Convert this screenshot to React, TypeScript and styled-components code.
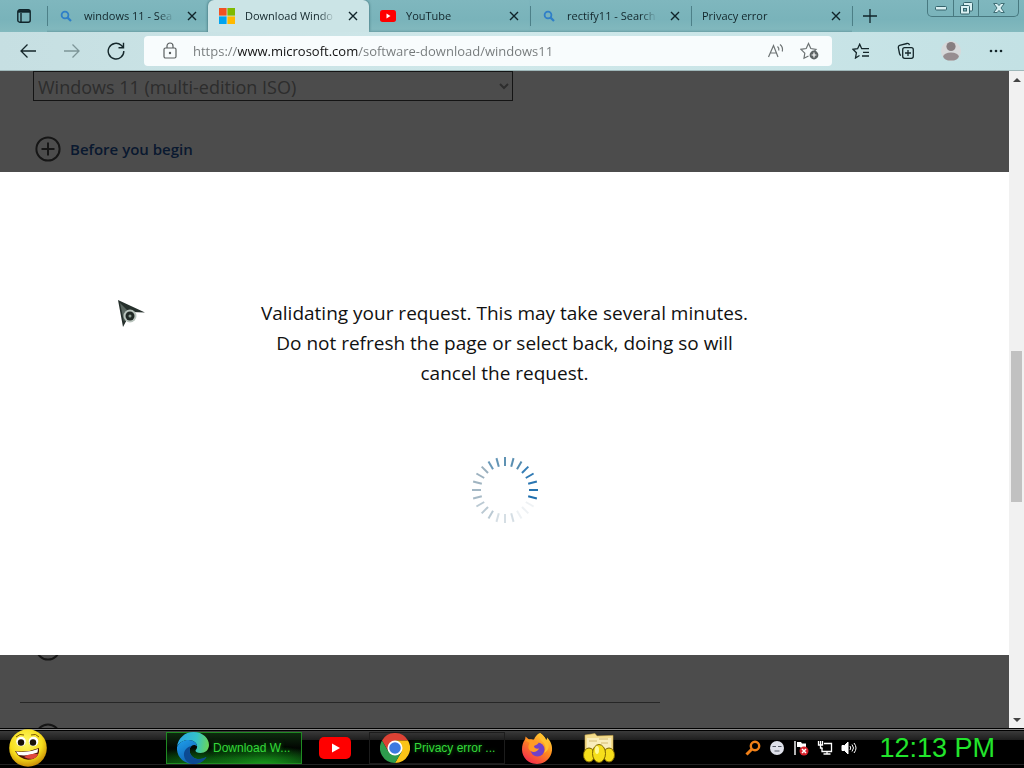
import React from "react";
import styled, { createGlobalStyle } from "styled-components";

const GlobalStyle = createGlobalStyle`
  * { box-sizing: border-box; }
  html, body, #root { height: 100%; }
  body { margin: 0; font-family: "Open Sans", "Noto Sans", sans-serif; }
  button { font: inherit; color: inherit; background: none; border: 0; padding: 0; }
  svg { display: block; flex: none; }
`;

const Desktop = styled.div`
  position: relative;
  display: flex;
  flex-direction: column;
  height: 100vh;
  overflow: hidden;
  background: #000;
`;

/* ---------- Tab strip ---------- */

const TabStrip = styled.header`
  display: flex;
  flex: none;
  height: 32px;
  background: linear-gradient(#7fb7be, #79b3ba 60%, #83b9be);
`;

const TabMenuButton = styled.button`
  display: grid;
  place-items: center;
  flex: none;
  width: 47px;
`;

const Tabs = styled.nav`
  display: flex;
  flex: 0 1 805px;
  min-width: 0;
`;

const Tab = styled.div<{ $active?: boolean; $divided?: boolean }>`
  display: flex;
  align-items: center;
  flex: 1 1 0;
  min-width: 0;
  gap: 10px;
  padding: 0 8px 0 11px;
  color: #12262b;
  background-color: ${(p) => (p.$active ? "#cbe4e6" : "transparent")};
  border-radius: ${(p) => (p.$active ? "6px 6px 0 0" : "0")};
  box-shadow: ${(p) => (p.$active ? "0 0 3px #2f5f66" : "inset 0 -2px 2px -1px #6a9ea5")};
  background-image: ${(p) =>
    p.$divided ? "linear-gradient(#4c7f86, #4c7f86)" : "none"};
  background-size: 1px 20px;
  background-repeat: no-repeat;
  background-position: 0 6px;
`;

const TabTitle = styled.a`
  flex: 1;
  min-width: 0;
  overflow: hidden;
  white-space: nowrap;
  font-size: 11px;
  line-height: 16px;
  color: inherit;
  text-decoration: none;
  mask-image: linear-gradient(to right, #000 82%, transparent);
`;

const CloseButton = styled.button`
  display: grid;
  place-items: center;
  flex: none;
  width: 16px;
  height: 16px;
`;

const NewTabButton = styled.button`
  display: grid;
  place-items: center;
  width: 36px;
  background: linear-gradient(#4c7f86, #4c7f86) 0 6px / 1px 20px no-repeat;
`;

const Caption = styled.div`
  display: flex;
  flex: none;
  height: 17px;
  margin: 0 5px 0 auto;
  border: 1px solid #487980;
  border-top: 0;
  border-radius: 0 0 5px 5px;
`;

const CaptionButton = styled.button<{ $wide?: boolean }>`
  display: grid;
  place-items: center;
  width: ${(p) => (p.$wide ? 40 : 25)}px;
  & + & { border-left: 1px solid #487980; }
`;

/* ---------- Toolbar ---------- */

const Toolbar = styled.div`
  position: relative;
  display: flex;
  align-items: center;
  flex: none;
  height: 39px;
  padding: 0 6px;
  background: linear-gradient(to right, #c6dfe2, #cfe8ea 50%, #c3e1e4);
  border-bottom: 1px solid #9fb8ba;
`;

const ToolButton = styled.button<{ $wide?: boolean }>`
  display: grid;
  place-items: center;
  flex: none;
  width: ${(p) => (p.$wide ? 45 : 44)}px;
  height: 32px;
`;

const AddressBar = styled.div`
  display: flex;
  align-items: center;
  flex: 1;
  min-width: 0;
  height: 30px;
  margin: 0 6px;
  padding: 0 12px 0 18px;
  gap: 15px;
  background: #f8fcfd;
  border-radius: 4px;
`;

const AddressInput = styled.input`
  flex: 1;
  min-width: 0;
  border: 0;
  outline: 0;
  padding: 0;
  font: 13px/20px "Open Sans", sans-serif;
  color: transparent;
  background: linear-gradient(to right, #74797a 45px, #111 45px 165px, #74797a 165px);
  background-clip: text;
  -webkit-background-clip: text;
`;

/* ---------- Page ---------- */

const Viewport = styled.main`
  display: flex;
  flex: 1;
  min-height: 0;
  background: #fff;
`;

const Page = styled.div`
  position: relative;
  flex: 1;
  min-width: 0;
  overflow: hidden;
`;

const Document = styled.div`
  display: flex;
  flex-direction: column;
  padding: 0 33px;
`;

const EditionSelect = styled.select`
  width: 480px;
  max-width: 100%;
  height: 30px;
  padding: 1px 0 0;
  font: 18px/26px "Open Sans", sans-serif;
  color: #969696;
  background: #fff;
  border: 1px solid #444;
  border-radius: 0;
`;

const Expander = styled.button<{ $space: number }>`
  display: flex;
  align-items: center;
  gap: 9px;
  height: 26px;
  margin-top: ${(p) => p.$space}px;
  padding-left: 2px;
  font-size: 15px;
  font-weight: 600;
  color: #1f549e;
`;

const Rule = styled.hr`
  width: 640px;
  max-width: 100%;
  height: 1px;
  margin: 41px 0 0 -13px;
  border: 0;
  background: #808080;
`;

const Overlay = styled.div`
  position: absolute;
  inset: 0;
  display: flex;
  padding: 101px 0 73px;
  background: rgba(0, 0, 0, 0.7);
`;

const Dialog = styled.section`
  display: flex;
  flex-direction: column;
  align-items: center;
  flex: 1;
  padding-top: 126px;
  gap: 68px;
  background: #fff;
`;

const Message = styled.p`
  max-width: 500px;
  margin: 0;
  text-align: center;
  font-size: 19px;
  line-height: 30px;
  color: #111;
`;

const ScrollBar = styled.div`
  display: flex;
  flex-direction: column;
  align-items: center;
  flex: none;
  width: 15px;
  background: #f1f1f1;
`;

const ScrollArrow = styled.button`
  display: grid;
  place-items: center;
  width: 15px;
  height: 17px;
`;

const ScrollTrack = styled.div`
  display: flex;
  flex-direction: column;
  flex: 1;
`;

const ScrollSpace = styled.div<{ $part: number }>`
  flex: ${(p) => p.$part};
`;

const ScrollThumb = styled.div`
  flex: 151;
  width: 11px;
  background: #c1c1c1;
`;

/* ---------- Taskbar ---------- */

const Taskbar = styled.footer`
  display: flex;
  align-items: center;
  flex: none;
  height: 40px;
  padding: 0 29px 0 8px;
  background: linear-gradient(
    #000 0 1px, #8a8a8a 1px 2px, #000 2px 3px, #3a3a3a 3px, #1e1e1e 12px,
    #000 12px 36px, #222 36px 37px, #000 37px
  );
`;

const StartButton = styled.button`
  width: 40px;
  margin-right: 118px;
`;

const TaskButton = styled.button<{ $active?: boolean }>`
  display: flex;
  align-items: center;
  flex: none;
  width: 136px;
  height: 32px;
  padding-left: 10px;
  gap: 4px;
  font: 12px/16px "Liberation Sans", Arial, sans-serif;
  color: #35d83a;
  text-shadow: 0 0 4px #0a7a10;
  border: 1px solid ${(p) => (p.$active ? "#1f8a22" : "#1c1c1c")};
  background: ${(p) =>
    p.$active
      ? "radial-gradient(ellipse at 72% 110%, #18a31c, transparent 45%), radial-gradient(ellipse at 25% 110%, #0d6e10, transparent 40%), linear-gradient(#0d2a0e, #020602 50%, #06330a)"
      : "transparent"};
`;

const TaskIcon = styled.button<{ $gap: number }>`
  margin-left: ${(p) => p.$gap}px;
`;

const Tray = styled.div`
  display: flex;
  align-items: center;
  gap: 8px;
  margin-left: auto;
`;

const Clock = styled.time`
  margin-left: 14px;
  font: 27px/40px "Liberation Sans", Arial, sans-serif;
  white-space: nowrap;
  color: #22e42c;
`;

const Pointer = styled.svg`
  position: absolute;
  left: 116px;
  top: 298px;
  pointer-events: none;
`;

/* ---------- Drawings ---------- */

const SearchGlyph = () => (
  <svg width="16" height="14" viewBox="-1 0 16 14" fill="none" stroke="#2f7fc8" strokeWidth="1.8">
    <circle cx="6" cy="6" r="3.4" />
    <path d="M8.600 8.600 12 12" strokeWidth="2.200" />
  </svg>
);

const MicrosoftLogo = () => (
  <svg width="16" height="16" viewBox="0 0 16 16">
    <path fill="#f25022" d="M0 0h7.600v7.600H0z" />
    <path fill="#7fba00" d="M8.400 0H16v7.600H8.400z" />
    <path fill="#00a4ef" d="M0 8.400h7.600V16H0z" />
    <path fill="#ffb900" d="M8.400 8.400H16V16H8.400z" />
  </svg>
);

const YouTubeLogo = ({ w, h }: { w: number; h: number }) => (
  <svg width={w} height={h} viewBox="0 0 32 22" preserveAspectRatio="none">
    <rect width="32" height="22" rx="5" fill="#f00" />
    <path d="M13 6.500 21 11l-8 4.500z" fill="#fff" />
  </svg>
);

const Cross = () => (
  <svg width="10" height="10" viewBox="0 0 10 10" stroke="#10242a" strokeWidth="1.400">
    <path d="M1 1l8 8M9 1 1 9" />
  </svg>
);

const CirclePlus = () => (
  <svg width="26" height="26" viewBox="0 0 26 26" fill="none" stroke="#4a4a4a" strokeWidth="2">
    <circle cx="13" cy="13" r="11.600" />
    <path d="M13 6.500v13M6.500 13h13" />
  </svg>
);

const Spinner = () => (
  <svg width="68" height="68" viewBox="0 0 68 68" role="img" aria-label="Loading">
    {Array.from({ length: 24 }, (_, i) => {
      const age = (7 - i + 24) % 24;
      const strength = age > 20 ? 0.12 : age > 17 ? 0.3 : age > 14 ? 0.5 : 1 - age * 0.025;
      return (
        <line
          key={i}
          x1="34"
          y1="1"
          x2="34"
          y2="10"
          stroke={age < 5 ? "#1f6fae" : age < 10 ? "#3d7ba4" : "#7895a8"}
          strokeWidth="2"
          opacity={strength}
          transform={`rotate(${i * 15} 34 34)`}
        />
      );
    })}
  </svg>
);

const StartFace = () => (
  <svg width="40" height="38" viewBox="0 0 40 38">
    <defs>
      <radialGradient id="face" cx="45%" cy="35%" r="65%">
        <stop offset="0" stopColor="#fffb6a" />
        <stop offset=".65" stopColor="#f7de1c" />
        <stop offset="1" stopColor="#c98d05" />
      </radialGradient>
    </defs>
    <circle cx="20" cy="19" r="18.800" fill="url(#face)" />
    <circle cx="13" cy="12.500" r="4.800" fill="#fff" />
    <circle cx="25.500" cy="12.500" r="4.800" fill="#fff" />
    <circle cx="13" cy="13.500" r="3.200" fill="#1a1208" />
    <circle cx="25" cy="13.500" r="3.200" fill="#1a1208" />
    <path d="M8 8q4-4 8-2M23 6q5-2 8 2" stroke="#7a5500" fill="none" />
    <path d="M7 22q12 2 24-3 1 8-6 11-12 3-18-8z" fill="#4b1408" />
    <path d="M8 22.500q11 2 22-2.500l-.5 3.500q-9 4-19 2.500z" fill="#fff" />
    <path d="M16 28q6-4 14-3-1 4-6 5-5 0-8-2z" fill="#e0473f" />
  </svg>
);

const EdgeLogo = () => (
  <svg width="32" height="32" viewBox="0 0 32 32">
    <defs>
      <linearGradient id="edgeTop" x1="0" y1=".4" x2="1" y2=".5">
        <stop offset="0" stopColor="#2aa6e6" />
        <stop offset=".6" stopColor="#35c1c9" />
        <stop offset="1" stopColor="#69d65a" />
      </linearGradient>
      <linearGradient id="edgeLow" x1="0" y1="0" x2=".7" y2="1">
        <stop offset="0" stopColor="#1fa0ec" />
        <stop offset="1" stopColor="#0d55a8" />
      </linearGradient>
    </defs>
    <path fill="url(#edgeTop)" d="M0 15C1 6 8 0 16.500 0 26 0 32 6.500 32 13c0 5-4 8-8.500 8-3.500 0-5-1.300-5-2.300 0-.8 1.600-1.500 1.600-4.200 0-3.500-3.500-6.500-8.500-6.500C6 8 1.500 11 0 15z" />
    <path fill="url(#edgeLow)" d="M0 15C2 10.500 6.500 8 11.600 8c5 0 8.500 3 8.500 6.500-1.500-2-4-2-5.600-.5-3 2.600-2.500 8.500 2 11.500 4 2.500 9 1.500 13-.6C26 30 21.500 32 16 32 6.500 32-.8 24.500 0 15z" />
    <path fill="#0c4a92" d="M14.500 14c-5 1-8 5-7.500 9.500.5 4.500 4.500 8.500 9 8.500 5.500 0 10.500-2.500 13.500-7-4 2-9 3-13 .5-4.500-3-5-8.900-2-11.500z" />
  </svg>
);

const ChromeLogo = () => (
  <svg width="30" height="30" viewBox="0 0 30 30">
    <path fill="#dc4234" d="M2 7.500A15 15 0 0 1 28 7.500H15l-6.500 11.250z" />
    <path fill="#fbc417" d="M28 7.500A15 15 0 0 1 15 30l6.500-11.250L15 7.500z" />
    <path fill="#2d9c4c" d="M15 30A15 15 0 0 1 2 7.500l6.500 11.250H21.500z" />
    <circle cx="15" cy="15" r="7.500" fill="#fff" />
    <circle cx="15" cy="15" r="5.800" fill="#3b79e0" />
  </svg>
);

const FirefoxLogo = () => (
  <svg width="32" height="32" viewBox="0 0 32 32">
    <defs>
      <linearGradient id="fox" x1=".85" y1="0" x2=".2" y2="1">
        <stop offset="0" stopColor="#ffe23c" />
        <stop offset=".45" stopColor="#ff8a1f" />
        <stop offset="1" stopColor="#f2264f" />
      </linearGradient>
    </defs>
    <path fill="url(#fox)" d="M19 1c3 2 5 4 6 7 1-.5 1-1.500 1-2.500 4 4 5.500 8 5 13C30.300 26 24 32 16 32S1 26 1 17.500c0-4 1-7.500 3-10 .3-1 .5-2 .5-3L8 7.500c2-.6 4-.4 5 .1C14 5 16 2 19 1z" />
    <circle cx="16.500" cy="17.500" r="7" fill="#7141c8" />
    <path fill="#ff9a24" d="M4 8c3-1.500 7-.5 9 1.500l4.500.5c.5 2.500-3 3-4.500 4 0 2 2 3 5 2.500-2 4.500-8.500 4.500-10.500 0-.5-3 .5-4 1-5.500C7 10 5.500 9 4 8z" />
    <path fill="#ffc02e" d="M19 1c-2 5 1 7 4 10 2 3 2 7 0 10 6-3 6-9 2-13-1-3-3-5-6-7z" />
  </svg>
);

const FolderIcon = () => (
  <svg width="32" height="30" viewBox="0 0 32 30">
    <path fill="#f3dc8d" stroke="#cda94a" strokeWidth=".6" d="M2 2 12 .6 14 3l16-.6V24H2z" />
    <path fill="#f9edbb" d="M4 5h24v10H4z" />
    <path stroke="#d4bb71" d="M6 8h8M16 6h9M18 10h7" />
    <g fill="#f6df1b" stroke="#7b6300">
      <ellipse cx="6" cy="22" rx="5.500" ry="7" />
      <ellipse cx="26" cy="22" rx="5.500" ry="7" />
      <ellipse cx="16" cy="20.500" rx="6.500" ry="9" />
    </g>
    <ellipse cx="14" cy="17" rx="2" ry="4" fill="#fffa9a" />
  </svg>
);

export default function App() {
  return (
    <Desktop>
      <GlobalStyle />
      <TabStrip>
        <TabMenuButton aria-label="Tab actions">
          <svg width="14" height="14" viewBox="0 0 14 14" fill="none" stroke="#10242a" strokeWidth="1.400">
            <rect x=".8" y=".8" width="12.400" height="12.400" rx="2" />
            <path d="M1 2.400h12" strokeWidth="2.600" />
            <path d="M4 4v9" />
          </svg>
        </TabMenuButton>
        <Tabs>
          <Tab $divided>
            <SearchGlyph />
            <TabTitle href="#">windows 11 - Sea</TabTitle>
            <CloseButton aria-label="Close tab"><Cross /></CloseButton>
          </Tab>
          <Tab $active>
            <MicrosoftLogo />
            <TabTitle href="#">Download Windo</TabTitle>
            <CloseButton aria-label="Close tab"><Cross /></CloseButton>
          </Tab>
          <Tab>
            <YouTubeLogo w={16} h={12} />
            <TabTitle href="#">YouTube</TabTitle>
            <CloseButton aria-label="Close tab"><Cross /></CloseButton>
          </Tab>
          <Tab $divided>
            <SearchGlyph />
            <TabTitle href="#">rectify11 - Search</TabTitle>
            <CloseButton aria-label="Close tab"><Cross /></CloseButton>
          </Tab>
          <Tab $divided>
            <TabTitle href="#">Privacy error</TabTitle>
            <CloseButton aria-label="Close tab"><Cross /></CloseButton>
          </Tab>
        </Tabs>
        <NewTabButton aria-label="New tab">
          <svg width="14" height="14" viewBox="0 0 14 14" stroke="#10242a" strokeWidth="1.300">
            <path d="M7 0v14M0 7h14" />
          </svg>
        </NewTabButton>
        <Caption>
          <CaptionButton aria-label="Minimize">
            <svg width="12" height="5" viewBox="0 0 12 5">
              <rect x=".5" y=".5" width="11" height="3.500" rx="1" fill="#d9f0f2" stroke="#34636b" />
            </svg>
          </CaptionButton>
          <CaptionButton aria-label="Restore">
            <svg width="13" height="13" viewBox="0 0 13 13" fill="#d9f0f2" stroke="#34636b">
              <rect x="3.500" y=".5" width="9" height="8.500" rx="1" />
              <rect x=".5" y="3.500" width="9" height="8.500" rx="1" />
              <rect x="3.500" y="6.500" width="3" height="2.500" fill="#7fb7be" />
            </svg>
          </CaptionButton>
          <CaptionButton $wide aria-label="Close">
            <svg width="12" height="10" viewBox="0 0 12 10">
              <path fill="#d9f0f2" stroke="#34636b" strokeWidth=".9" d="M.7.5h3.500L6 2.600 7.800.5h3.500L8 5l3.300 4.500H7.800L6 7.400 4.200 9.500H.7L4 5z" />
            </svg>
          </CaptionButton>
        </Caption>
      </TabStrip>

      <Toolbar>
        <ToolButton aria-label="Back">
          <svg width="16" height="14" viewBox="0 0 16 14" fill="none" stroke="#14262a" strokeWidth="1.300">
            <path d="M16 7H1M7.500.5 1 7l6.500 6.500" />
          </svg>
        </ToolButton>
        <ToolButton aria-label="Forward">
          <svg width="16" height="14" viewBox="0 0 16 14" fill="none" stroke="#7d9598" strokeWidth="1.300">
            <path d="M0 7h15M8.500.5 15 7l-6.500 6.500" />
          </svg>
        </ToolButton>
        <ToolButton aria-label="Refresh">
          <svg width="18" height="18" viewBox="0 0 18 18" fill="none" stroke="#14262a" strokeWidth="1.400">
            <path d="M16.800 9A7.800 7.800 0 1 1 14.200 3.300L16.500 5.500M16.500.8v4.900h-5" />
          </svg>
        </ToolButton>
        <AddressBar>
          <svg width="16" height="18" viewBox="0 0 16 18" fill="none" stroke="#5a5f60" strokeWidth="1.200">
            <rect x="2" y="6" width="12" height="10" rx="1.500" />
            <path d="M5 6V4a3 3 0 0 1 6 0v2" />
            <circle cx="8" cy="11" r=".6" fill="#5a5f60" />
          </svg>
          <AddressInput
            aria-label="Address"
            readOnly
            value="https://www.microsoft.com/software-download/windows11"
          />
          <button aria-label="Read aloud">
            <svg width="18" height="16" viewBox="0 0 18 16" fill="none" stroke="#6d7374" strokeWidth="1.200">
              <path d="M1.500 14 6.500 2.500 11 14M3.300 10h6" />
              <path d="M10.500 3.500q1.800 1.500 1.300 4M13 1.500q3.300 2.500 2.300 7" />
            </svg>
          </button>
          <button aria-label="Add to favorites">
            <svg width="20" height="18" viewBox="0 0 20 18" fill="none" stroke="#6d7374" strokeWidth="1.200">
              <path d="M8.500 14 4 16.300l.8-5.200L1 7.300l5.200-.8L8.500 1.500l2.300 5 5.200.8-1.500 1.500" />
              <circle cx="14" cy="13" r="4.400" fill="#5d6364" stroke="none" />
              <path d="M14 10.600v4.800M11.600 13h4.800" stroke="#fff" />
            </svg>
          </button>
        </AddressBar>
        <ToolButton $wide aria-label="Favorites">
          <svg width="18" height="16" viewBox="0 0 18 16" fill="none" stroke="#14262a" strokeWidth="1.300">
            <path d="M7.500 12.500 3.500 15l.9-5.200L1 6.300l4.600-.6L7.700 1.200l2 4.500h7.300M11 9.300h6M10 13h7" />
          </svg>
        </ToolButton>
        <ToolButton $wide aria-label="Collections">
          <svg width="18" height="18" viewBox="0 0 18 18" fill="none" stroke="#14262a" strokeWidth="1.300">
            <rect x="5.700" y="5.700" width="10.600" height="10.600" rx="2" />
            <path d="M11 8v6M8 11h6M4 13.500Q2.800 13 2.500 11.500L1.300 5.500Q1.200 3.800 2.600 3.400L10 1.500q2-.3 2.500 1.700" />
          </svg>
        </ToolButton>
        <ToolButton $wide aria-label="Profile">
          <svg width="20" height="20" viewBox="0 0 20 20">
            <circle cx="10" cy="10" r="10" fill="#d7d9da" />
            <circle cx="10" cy="5.500" r="4.600" fill="#877e80" />
            <ellipse cx="10" cy="15.600" rx="7.800" ry="4" fill="#978d90" />
          </svg>
        </ToolButton>
        <ToolButton $wide aria-label="Settings and more">
          <svg width="14" height="4" viewBox="0 0 14 4" fill="#14262a">
            <circle cx="2" cy="2" r="1.300" />
            <circle cx="7" cy="2" r="1.300" />
            <circle cx="12" cy="2" r="1.300" />
          </svg>
        </ToolButton>
      </Toolbar>

      <Viewport>
        <Page>
          <Document>
            <EditionSelect aria-label="Select download">
              <option>Windows 11 (multi-edition ISO)</option>
            </EditionSelect>
            <Expander $space={35}>
              <CirclePlus />
              Before you begin
            </Expander>
            <Expander $space={473} aria-label="Expand section">
              <CirclePlus />
            </Expander>
            <Rule />
            <Expander $space={20} aria-label="Expand section">
              <CirclePlus />
            </Expander>
          </Document>
          <Overlay>
            <Dialog role="dialog" aria-label="Validating">
              <Message>
                Validating your request. This may take several minutes. Do not refresh the
                page or select back, doing so will cancel the request.
              </Message>
              <Spinner />
            </Dialog>
          </Overlay>
        </Page>
        <ScrollBar>
          <ScrollArrow aria-label="Scroll up">
            <svg width="8" height="4" viewBox="0 0 8 4"><path d="M0 4 4 0l4 4z" fill="#444" /></svg>
          </ScrollArrow>
          <ScrollTrack>
            <ScrollSpace $part={263} />
            <ScrollThumb />
            <ScrollSpace $part={209} />
          </ScrollTrack>
          <ScrollArrow aria-label="Scroll down">
            <svg width="8" height="4" viewBox="0 0 8 4"><path d="M0 0h8L4 4z" fill="#444" /></svg>
          </ScrollArrow>
        </ScrollBar>
      </Viewport>

      <Taskbar>
        <StartButton aria-label="Start"><StartFace /></StartButton>
        <TaskButton $active><EdgeLogo />Download W...</TaskButton>
        <TaskIcon $gap={17} aria-label="YouTube"><YouTubeLogo w={32} h={22} /></TaskIcon>
        <TaskIcon as="span" $gap={18}>
          <TaskButton><ChromeLogo />Privacy error ...</TaskButton>
        </TaskIcon>
        <TaskIcon $gap={16} aria-label="Firefox"><FirefoxLogo /></TaskIcon>
        <TaskIcon $gap={30} aria-label="Files"><FolderIcon /></TaskIcon>
        <Tray>
          <svg width="16" height="16" viewBox="0 0 16 16" fill="none" stroke="#f08018">
            <circle cx="10" cy="6" r="4.200" strokeWidth="2.400" />
            <path d="M7 9 1.500 14.500" strokeWidth="3" />
          </svg>
          <svg width="16" height="16" viewBox="0 0 16 16" fill="none" stroke="#555a66">
            <circle cx="8" cy="8" r="7" fill="#dfe1ea" stroke="none" />
            <path d="M3.500 6.500h3.500M9 6.500h3.500M5.500 11h5" />
          </svg>
          <svg width="16" height="16" viewBox="0 0 16 16">
            <path d="M2 1v14" stroke="#fff" strokeWidth="1.400" />
            <path d="M4 2h4l1 1.500h4V8H8L7 7H4z" fill="#fff" />
            <circle cx="11" cy="11" r="4.500" fill="#d8212b" />
            <path d="M9 9l4 4M13 9l-4 4" stroke="#fff" strokeWidth="1.500" />
          </svg>
          <svg width="16" height="16" viewBox="0 0 16 16" fill="none" stroke="#fff" strokeWidth="1.300">
            <path d="M7 3.500h7.500v8H5V8M10 11.500v2.500M6.500 14h7" />
            <path d="M1.500 1v4h4V1M3.500 1v7h2" />
          </svg>
          <svg width="16" height="16" viewBox="0 0 16 16" fill="none" stroke="#fff">
            <path d="M1 5.500h2.500L7 2v12L3.500 10.500H1z" fill="#fff" />
            <path d="M9 6q1.500 2 0 4M11 4.500q3 3.500 0 7M13 3q4 5 0 10" />
          </svg>
          <Clock>12:13 PM</Clock>
        </Tray>
      </Taskbar>

      <Pointer width="32" height="32" viewBox="0 0 32 32" aria-hidden="true">
        <path d="M2 2 29 14.500 15 14 7 29z" fill="#26302c" />
        <path d="M4 5 12 13 8 24z" fill="#59655f" />
        <circle cx="14" cy="18" r="6.500" fill="#b9c4bd" />
        <circle cx="14" cy="18" r="4.500" fill="#222a26" />
        <circle cx="14" cy="18" r="1.500" fill="#8b9b92" />
      </Pointer>
    </Desktop>
  );
}
